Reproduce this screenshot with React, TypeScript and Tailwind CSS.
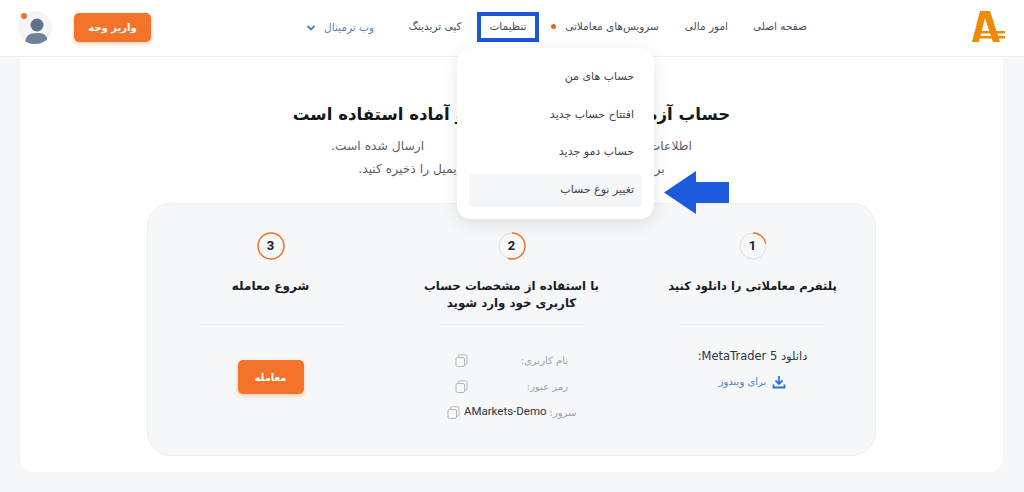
import React from "react";

const Ring = ({ n, pct }: { n: string; pct: number }) => {
  const c = 2 * Math.PI * 13;
  return (
    <div className="relative w-[28px] h-[28px] flex items-center justify-center">
      <svg width="28" height="28" viewBox="0 0 28 28" className="absolute inset-0">
        <circle cx="14" cy="14" r="13" fill="#f5f7f9" stroke="#dcdfe3" strokeWidth="1" />
        <circle cx="14" cy="14" r="13" fill="none" stroke="#f4732b" strokeWidth="1.5" strokeDasharray={`${c * pct} ${c}`} transform="rotate(-90 14 14)" />
      </svg>
      <span className="relative text-[13px] font-bold text-[#1a2129] font-['Roboto',sans-serif]">{n}</span>
    </div>
  );
};

const Copy = () => (
  <svg width="13" height="13" viewBox="0 0 13 13" fill="none" stroke="#b3b8be" strokeWidth="1">
    <rect x="1" y="3.5" width="8.5" height="9" rx="1.5" />
    <path d="M3.5 3.5V2a1.2 1.2 0 0 1 1.2-1.2h6A1.2 1.2 0 0 1 12 2v7a1.2 1.2 0 0 1-1.2 1.2H9.5" />
  </svg>
);

const Item = ({ label, active }: { label: string; active?: boolean }) => (
  <div className={`h-[33px] mx-[12px] px-[8px] flex items-center rounded-[4px] text-[11px] text-[#3d444c] ${active ? "bg-[#f5f6f7]" : ""}`}>
    {label}
  </div>
);

const Cred = ({ label, value }: { label: string; value?: string }) => (
  <div className={`h-[26px] flex items-center justify-between mx-auto text-[10px] text-[#9aa1a9] whitespace-nowrap ${value ? "w-[130px]" : "w-[113px]"}`}>
    <span className="flex items-center gap-[3px]">
      {label}
      {value && <span dir="ltr" className="text-[#2d343b] text-[11.500px] font-['Roboto',sans-serif]">{value}</span>}
    </span>
    <Copy />
  </div>
);

export default function App() {
  return (
    <div dir="rtl" className="relative w-[1024px] h-[492px] overflow-hidden bg-[#f6f7f9] font-['DejaVu_Sans',sans-serif]">
      <header className="h-[57px] bg-white border-b border-[#eceef0] flex items-center pr-[19px] pl-[18px] text-[10.500px] text-[#4a5159] whitespace-nowrap">
        <svg width="33" height="31" viewBox="0 0 33 31" className="shrink-0 mb-[4px]">
          <path d="M8 0h10l10 31h-7L13 7 7 31H0Z" fill="#f18a00" />
          <path d="M6 20h27v2.500H6zM6 25h27v2.500H6z" fill="#f18a00" />
        </svg>
        <nav className="flex items-center mr-[164px] pb-[3px]">
          <span className="w-[56px] text-center">صفحه اصلی</span>
          <span className="w-[42px] text-center mr-[24px]">امور مالی</span>
          <span className="w-[100px] mr-[24px] text-center">سرویس‌های معاملاتی</span>
          <span className="w-[5px] h-[5px] rounded-full bg-[#e8622a] mr-[6px]" />
          <span className="w-[62px] h-[30px] mr-[12px] flex items-center justify-center border-4 border-[#1c55d6] text-[#3f464e]">تنظیمات</span>
          <span className="w-[56px] text-center mr-[14px]">کپی تریدینگ</span>
        </nav>
        <div className="flex items-center mr-[33px] pb-[1px] text-[#4c7fc4]">
          <span className="w-[50px] text-center">وب ترمینال</span>
          <svg width="10" height="10" viewBox="0 0 10 10" fill="none" stroke="#4c7fc4" strokeWidth="1.800" className="mr-[8px]">
            <path d="M1.500 3l3.500 3.500L8.500 3" />
          </svg>
        </div>
        <button className="mr-auto mb-[2px] w-[77px] h-[29px] rounded-[5px] bg-[#f4732b] text-white text-[10px] font-bold shadow-[0_2px_4px_rgba(244,115,43,0.35)]">
          واریز وجه
        </button>
        <div className="relative mr-[22px] mb-[1px] w-[34px] h-[33px] rounded-full bg-[#f3f5f7] overflow-hidden shrink-0">
          <svg width="34" height="33" viewBox="0 0 34 33">
            <circle cx="19" cy="14" r="6.500" fill="#5f7488" />
            <path d="M7 33c0-8 4-11 12-11s11 3 11 11Z" fill="#6d8298" />
          </svg>
        </div>
      </header>
      <span className="absolute left-[21px] top-[13px] w-[6px] h-[6px] rounded-full bg-[#f4732b]" />

      <main className="ml-[20px] mr-[21px] h-[415px] bg-white rounded-b-[14px] pt-[47px] flex flex-col items-center">
        <h1 className="text-[16.600px] leading-[22px] font-bold text-[#12171c] whitespace-nowrap">حساب آزمایشی شما کار می‌کند و آماده استفاده است</h1>
        <p className="mt-[9px] text-[12.300px] leading-[23px] text-[#5b626a] text-center whitespace-nowrap">
          اطلاعات حساب کاربری شما به آدرس ایمیل<span className="inline-block w-[44px]" />ارسال شده است.
          <br />
          برای دسترسی به حساب خود، لطفا این ایمیل را ذخیره کنید.
        </p>
        <section className="mt-[22px] w-[729px] h-[253px] bg-[#f5f7f9] border border-[#eceef1] rounded-[24px] grid grid-cols-3 px-[2px] pt-[28px]">
          <div className="flex flex-col items-center">
            <Ring n="1" pct={0.22} />
            <h2 className="mt-[18px] h-[46px] text-[11.500px] leading-[17px] font-bold text-[#171c22] text-center whitespace-nowrap">پلتفرم معاملاتی را دانلود کنید</h2>
            <div className="w-[144px] h-px bg-[#e7e9ec]" />
            <div className="mt-[23px] text-[11.500px] leading-[16px] text-[#2d343b]">دانلود MetaTrader 5:</div>
            <div className="mt-[10px] flex items-center gap-[6px] text-[10px] text-[#4c7fc4]">
              <svg width="14" height="14" viewBox="0 0 14 14" fill="none" stroke="#2f74c9" strokeWidth="1.800">
                <path d="M7 1v7.500M3.500 5.500 7 9l3.500-3.500M1.500 9.500v3h11v-3" />
              </svg>
              برای ویندوز
            </div>
          </div>
          <div className="flex flex-col items-center">
            <Ring n="2" pct={0.55} />
            <h2 className="mt-[18px] h-[46px] text-[11.800px] leading-[17px] font-bold text-[#171c22] text-center whitespace-nowrap">
              با استفاده از مشخصات حساب
              <br />
              کاربری خود وارد شوید
            </h2>
            <div className="w-[144px] h-px bg-[#e7e9ec]" />
            <div className="mt-[22px] w-full">
              <Cred label="نام کاربری:" />
              <Cred label="رمز عبور:" />
              <Cred label="سرور:" value="AMarkets-Demo" />
            </div>
          </div>
          <div className="flex flex-col items-center">
            <Ring n="3" pct={1} />
            <h2 className="mt-[18px] h-[46px] text-[12px] leading-[17px] font-bold text-[#171c22] text-center">شروع معامله</h2>
            <div className="w-[144px] h-px bg-[#e7e9ec]" />
            <button className="mt-[35px] w-[66px] h-[34px] rounded-[5px] bg-[#f4732b] text-white text-[10px] font-bold shadow-[0_2px_4px_rgba(244,115,43,0.35)]">معامله</button>
          </div>
        </section>
      </main>

      <div className="absolute left-[457px] top-[48px] w-[197px] h-[171px] bg-white rounded-[14px] shadow-[0_4px_16px_rgba(30,40,60,0.12)] pt-[13px] flex flex-col gap-[4.500px]">
        <Item label="حساب های من" />
        <Item label="افتتاح حساب جدید" />
        <Item label="حساب دمو جدید" />
        <Item label="تغییر نوع حساب" active />
      </div>
      <svg width="66" height="43" viewBox="0 0 66 43" className="absolute left-[664px] top-[171px]">
        <path d="M0 21.500 32 0v11h33v21H32v11Z" fill="#1d5bdc" />
      </svg>
    </div>
  );
}
